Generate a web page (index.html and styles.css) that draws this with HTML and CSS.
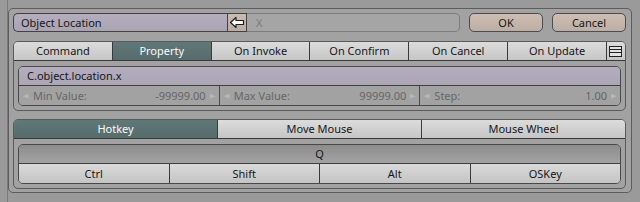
FILE: index.html
```html
<!DOCTYPE html>
<html>
<head>
<meta charset="utf-8">
<link rel="stylesheet" href="styles.css">
</head>
<body>
<div class="region">
  <div class="panel">
    <div class="toprow">
      <div class="namefield">Object Location</div>
      <div class="arrowbtn">
        <svg width="16" height="13" viewBox="0 0 16 13"><path d="M1.5 6.5 L7 1.5 L7 4.5 L14.5 4.5 L14.5 8.5 L7 8.5 L7 11.5 Z" fill="#fff" stroke="#1e1e1e" stroke-width="1.2" stroke-linejoin="round"/></svg>
      </div>
      <div class="xfield">X</div>
      <div class="btn warm ok">OK</div>
      <div class="btn warm cancel">Cancel</div>
    </div>

    <div class="group first">
      <div class="tabs">
        <div class="tab">Command</div>
        <div class="tab active">Property</div>
        <div class="tab">On Invoke</div>
        <div class="tab">On Confirm</div>
        <div class="tab">On Cancel</div>
        <div class="tab">On Update</div>
        <div class="tab menu">
          <svg width="13" height="11" viewBox="0 0 13 11"><rect x="0.5" y="0.5" width="12" height="10" fill="#e4e4e4" stroke="#222"/><line x1="0.5" y1="3.5" x2="12.5" y2="3.5" stroke="#222"/><line x1="0.5" y1="6.5" x2="12.5" y2="6.5" stroke="#222"/></svg>
        </div>
      </div>
      <div class="box">
        <div class="pathfield">C.object.location.x</div>
        <div class="nums">
          <div class="num"><span class="arr">&#9664;</span><span class="lbl">Min Value:</span><span class="val">-99999.00</span><span class="arr">&#9654;</span></div>
          <div class="num"><span class="arr">&#9664;</span><span class="lbl">Max Value:</span><span class="val">99999.00</span><span class="arr">&#9654;</span></div>
          <div class="num"><span class="arr">&#9664;</span><span class="lbl">Step:</span><span class="val">1.00</span><span class="arr">&#9654;</span></div>
        </div>
      </div>
    </div>

    <div class="group second">
      <div class="tabs">
        <div class="tab active">Hotkey</div>
        <div class="tab">Move Mouse</div>
        <div class="tab">Mouse Wheel</div>
      </div>
      <div class="box">
        <div class="keyfield">Q</div>
        <div class="mods">
          <div class="mod">Ctrl</div>
          <div class="mod">Shift</div>
          <div class="mod">Alt</div>
          <div class="mod">OSKey</div>
        </div>
      </div>
    </div>
  </div>
</div>
</body>
</html>
```

FILE: styles.css
```css
html, body {
  margin: 0;
  padding: 0;
}
body {
  width: 640px;
  height: 202px;
  overflow: hidden;
  background: #9a9a9a;
  font-family: "Noto Sans", "Open Sans", sans-serif;
  font-size: 11px;
  color: #161616;
}
.region {
  height: 202px;
  border-left: 1px solid #7a7a7a;
  margin-left: 7px;
  padding-top: 8px;
  box-sizing: border-box;
}
.panel {
  width: 624px;
  height: 185px;
  box-sizing: border-box;
  border: 1px solid #5c5c5c;
  border-radius: 5px;
  background: #a2a2a2;
  padding: 4px 5px 4px 4px;
}
.toprow {
  display: flex;
  height: 19px;
}
.namefield {
  width: 214px;
  box-sizing: border-box;
  border: 1px solid #424242;
  border-right: none;
  border-radius: 5px 0 0 5px;
  background: linear-gradient(#b3adbd, #a9a3b2);
  padding-left: 7px;
  line-height: 17px;
}
.arrowbtn {
  width: 20px;
  box-sizing: border-box;
  border: 1px solid #424242;
  background: linear-gradient(#cbbcb2, #bcada3);
  display: flex;
  align-items: center;
  justify-content: center;
}
.xfield {
  width: 213px;
  box-sizing: border-box;
  border: 1px solid #7c7c7c;
  border-left: none;
  border-radius: 0 5px 5px 0;
  background: #a5a5a5;
  color: #7c7c7c;
  padding-left: 9px;
  line-height: 17px;
}
.btn {
  width: 74px;
  box-sizing: border-box;
  border: 1px solid #4c4c4c;
  border-radius: 5px;
  text-align: center;
  line-height: 17px;
}
.warm {
  background: linear-gradient(#cdbdb3, #bdaea4);
}
.ok {
  margin-left: 9px;
}
.cancel {
  margin-left: 9px;
}
.group {
  border: 1px solid #5a5a5a;
  border-radius: 5px;
  padding-bottom: 4px;
}
.first {
  margin-top: 9px;
}
.second {
  margin-top: 8px;
}
.tabs {
  display: flex;
  height: 18px;
  border-bottom: 1px solid #3a3a3a;
}
.tab {
  flex: 1;
  text-align: center;
  line-height: 18px;
  background: linear-gradient(#dcdcdc, #c6c6c6);
  border-left: 1px solid #3a3a3a;
}
.tab:first-child {
  border-left: none;
  border-top-left-radius: 4px;
}
.tab:last-child {
  border-top-right-radius: 4px;
}
.tab.active {
  background: linear-gradient(#617878, #566c6c);
  color: #fafafa;
}
.tab.menu {
  flex: 0 0 18px;
  display: flex;
  align-items: center;
  justify-content: center;
}
.box {
  margin: 5px 4px 0 4px;
  border: 1px solid #484848;
  border-radius: 5px;
  overflow: hidden;
}
.pathfield {
  height: 18px;
  line-height: 18px;
  padding-left: 8px;
  background: linear-gradient(#b3adbd, #aba5b4);
  border-bottom: 1px solid #3e3e3e;
}
.nums {
  display: flex;
  height: 19px;
  background: #a2a2a2;
}
.num {
  flex: 1;
  display: flex;
  align-items: center;
  color: #666666;
  padding: 0 4px;
  border-left: 1px solid #4a4a4a;
}
.num:first-child {
  border-left: none;
}
.arr {
  font-size: 7px;
  color: #b8b8b8;
}
.lbl {
  margin-left: 5px;
  flex: 1;
}
.val {
  margin-right: 4px;
}
.keyfield {
  height: 18px;
  line-height: 18px;
  text-align: center;
  background: linear-gradient(#8c8c8c, #a3a3a3);
  border-bottom: 1px solid #3e3e3e;
}
.mods {
  display: flex;
  height: 19px;
}
.mod {
  flex: 1;
  text-align: center;
  line-height: 19px;
  background: linear-gradient(#dadada, #c4c4c4);
  border-left: 1px solid #3a3a3a;
}
.mod:first-child {
  border-left: none;
}
```
